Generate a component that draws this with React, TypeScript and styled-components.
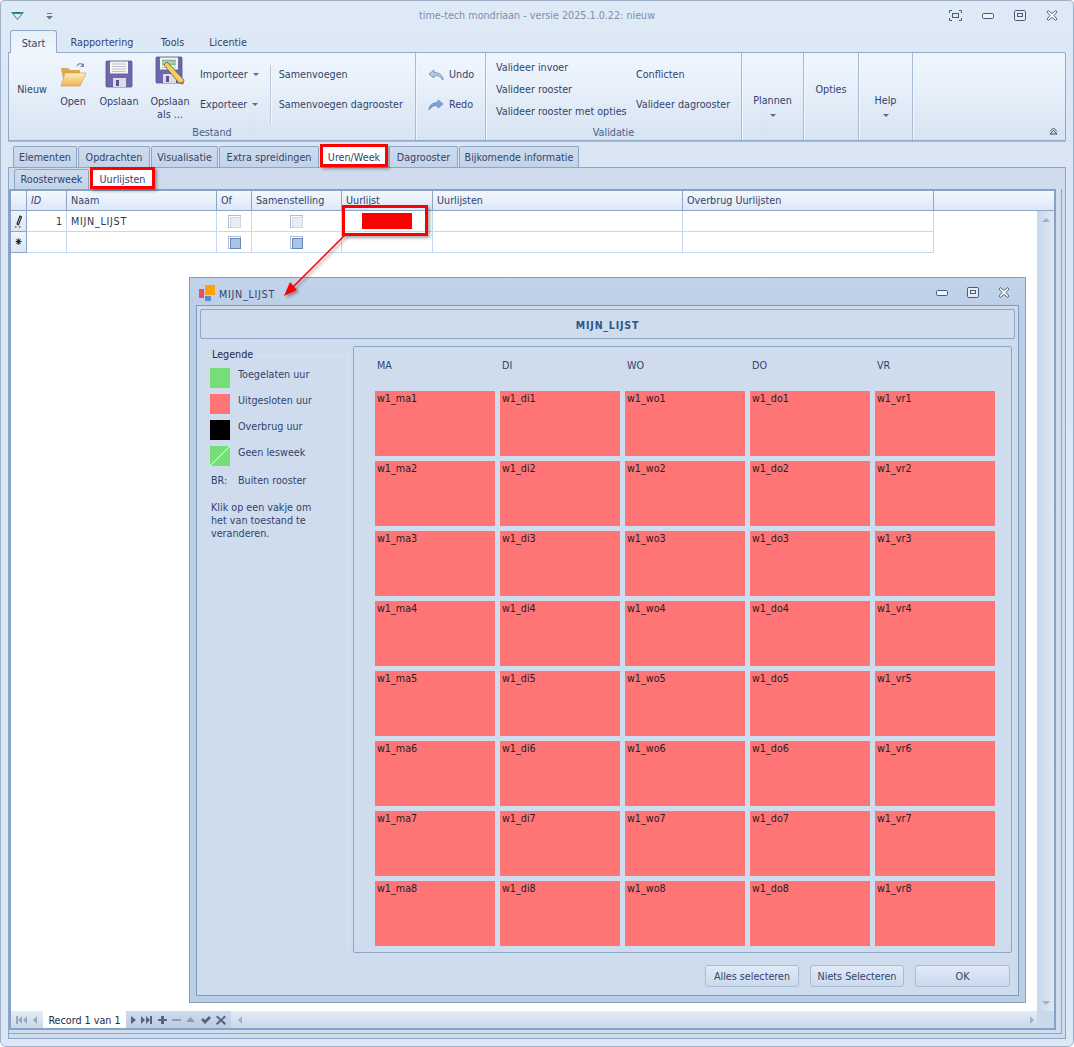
import React from "react";
import styled, { createGlobalStyle } from "styled-components";

const Global = createGlobalStyle`
  html, body { margin: 0; padding: 0; width: 1074px; height: 1047px; overflow: hidden; background: #fff; }
  * { box-sizing: border-box; }
  body { font-family: "DejaVu Sans Condensed", "DejaVu Sans", "Liberation Sans", sans-serif; font-stretch: condensed; font-size: 10.7px; color: #33436b; }
`;
const INK = "#33436b";
const COLS = "16px 40px 150px 35px 90px 91px 250px 251px";

const Win = styled.div`
  width: 1074px; height: 1047px; display: flex; flex-direction: column;
  border: 1px solid #9fb0c6; border-radius: 4px 4px 6px 6px; padding-bottom: 7px;
  background: linear-gradient(#dfeaf7, #dae6f4 130px, #dce8f5);
`;
const TitleBar = styled.div`
  height: 29px; flex: none; display: grid; grid-template-columns: 200px 1fr 200px; align-items: center;
`;
const QuickBar = styled.div`display: flex; align-items: center; gap: 21px; padding-left: 9px;`;
const Title = styled.div`text-align: center; color: #7d8ea9;`;
const WinBtns = styled.div`display: flex; justify-content: flex-end; align-items: center; gap: 20px; padding-right: 15px;`;
const RibbonTabs = styled.div`height: 23px; flex: none; display: flex; padding-left: 9px; align-items: flex-end; position: relative; z-index: 1;`;
const RibbonTab = styled.div<{ $w: number; $active?: boolean }>`
  width: ${p => p.$w}px; height: 23px; padding-top: 2px; display: flex; align-items: center; justify-content: center; color: ${INK};
  ${p => p.$active ? `background: linear-gradient(#e6f0fb, #eff6fd); border: 1px solid #93a9c8; border-bottom: 0; border-radius: 3px 3px 0 0;` : ""}
`;
const Ribbon = styled.div`
  height: 89px; flex: none; margin: -1px 7px 0; display: flex; border: 1px solid #93a9c8; border-radius: 0 2px 0 0;
  background: linear-gradient(#f0f6fe, #e6eff9 45%, #d6e3f2);
  box-shadow: 0 1px 0 #a9bcd6;
`;
const Group = styled.div<{ $w: number }>`
  width: ${p => p.$w}px; flex: none; display: flex; flex-direction: column; border-right: 1px solid #a8bbd4; box-shadow: 1px 0 0 #f2f7fd;
`;
const GroupBody = styled.div`height: 73px; display: flex; position: relative;`;
const GroupCaption = styled.div`height: 15px; text-align: center; color: #4a6190; line-height: 15px;`;
const Large = styled.div<{ $w: number; $ml?: number }>`
  width: ${p => p.$w}px; margin-left: ${p => p.$ml ?? 0}px; flex: none; display: flex; flex-direction: column; align-items: center;
  text-align: center; line-height: 13px; padding-top: 6px;
`;
const IconBox = styled.div`height: 29px; display: flex; align-items: flex-end; justify-content: center; margin-bottom: 7px;`;
const TextOnly = styled.div<{ $w: number; $pt: number; $ml?: number }>`
  width: ${p => p.$w}px; margin-left: ${p => p.$ml ?? 0}px; flex: none; padding-top: ${p => p.$pt}px; text-align: center; line-height: 13px;
`;
const SmallCol = styled.div<{ $w?: number; $ml: number }>`
  ${p => p.$w ? `width: ${p.$w}px;` : ""} margin-left: ${p => p.$ml}px; flex: none; padding-top: 15px; display: flex; flex-direction: column; gap: 17px;
`;
const TripleCol = styled(SmallCol)`padding-top: 8px; gap: 9px;`;
const Small = styled.div`height: 13px; line-height: 13px; white-space: nowrap; display: flex; align-items: center; gap: 5px;`;
const VSep = styled.div`width: 1px; height: 58px; margin: 12px 0 0 11px; background: #b9c9de; box-shadow: 1px 0 0 #f4f8fd;`;
const Caret = styled.span`display: inline-block; width: 0; height: 0; border: 3px solid transparent; border-top: 3px solid #5d6b86; border-bottom: 0;`;
const Fill = styled.div`flex: 1; position: relative;`;
const Collapse = styled.div`position: absolute; right: 7px; bottom: 5px; line-height: 0;`;

const Frame = styled.div`flex: 1; min-height: 0; margin: 5px 7px 0; display: flex; flex-direction: column;`;
const TabStrip = styled.div<{ $pl: number; $h: number }>`height: ${p => p.$h}px; flex: none; display: flex; padding-left: ${p => p.$pl}px; align-items: flex-end; position: relative; z-index: 1;`;
const Tab = styled.div<{ $w: number; $active?: boolean; $marked?: boolean }>`
  width: ${p => p.$w}px; height: 100%; flex: none; display: flex; align-items: center; justify-content: center; position: relative; margin-right: 1px;
  border: 1px solid #8ea6c6; border-bottom: 0; border-radius: 2px 2px 0 0; color: ${INK};
  background: ${p => p.$active ? "#fff" : "linear-gradient(#cfdcee, #c3d3e8)"};
  ${p => p.$marked ? `&::after { content: ""; position: absolute; inset: -3px -1px 0 -1px; border: 3px solid #f00; box-shadow: 2px 2px 3px rgba(0,0,0,.35); }` : ""}
`;
const OuterPanel = styled.div`
  flex: 1; min-height: 0; border: 1px solid #8ea6c6; background: #cfdcee; display: flex; flex-direction: column; padding: 1px 0 0 0;
`;
const InnerPanel = styled.div`
  flex: 1; min-height: 0; margin-right: 3px; margin-bottom: 4px; border-right: 1px solid #8ea6c6; border-bottom: 1px solid #8ea6c6; padding: 0 5px 3px 0; display: flex; flex-direction: column;
`;
const Grid = styled.div`
  flex: 1; min-height: 0; border: 2px solid #88a2c4; background: #fff; display: flex; flex-direction: column; position: relative;
`;
const HeaderRow = styled.div`
  height: 20px; flex: none; display: grid; grid-template-columns: ${COLS} 1fr; background: linear-gradient(#f3f8fe, #dce7f6); border-bottom: 1px solid #8ea6c6;
`;
const HCell = styled.div<{ $italic?: boolean }>`
  border-right: 1px solid #8ea6c6; padding-left: 4px; line-height: 19px; color: ${INK}; ${p => p.$italic ? "font-style: italic;" : ""}
  &:last-child { border-right: 0; }
`;
const GridMain = styled.div`flex: 1; min-height: 0; display: flex;`;
const Rows = styled.div`flex: 1; min-width: 0;`;
const Row = styled.div`
  width: 923px; height: 21px; display: grid; grid-template-columns: ${COLS}; border-bottom: 1px solid #c5d8f1;
`;
const Selector = styled.div`
  background: linear-gradient(#eef4fc, #dbe6f5); border-right: 1px solid #8ea6c6; border-bottom: 1px solid #8ea6c6; margin-bottom: -1px;
  display: flex; align-items: center; justify-content: center; color: #222; font-size: 12px;
`;
const Cell = styled.div<{ $right?: boolean; $center?: boolean }>`
  border-right: 1px solid #c5d8f1; padding: 0 4px; display: flex; align-items: center; position: relative; color: #2b3550; overflow: visible;
  ${p => p.$right ? "justify-content: flex-end;" : ""} ${p => p.$center ? "justify-content: center;" : ""}
`;
const CapsName = styled.span`letter-spacing: .7px;`;
const Check = styled.div<{ $new?: boolean }>`
  width: 13px; height: 13px; border: 1px solid #a9bfdc; padding: 1px; background: #fff;
  &::before { content: ""; display: block; width: 100%; height: 100%; border: 1px solid ${p => p.$new ? "#6b86ad" : "#cfd8e4"}; background: ${p => p.$new ? "#a9c4e6" : "#e9edf2"}; }
`;
const RedFill = styled.div`width: 50px; height: 16px; background: #f00;`;
const Mark = styled.div`
  position: absolute; left: 0; top: -6px; width: 86px; height: 31px; border: 3px solid #f00; box-shadow: 2px 2px 3px rgba(0,0,0,.35); z-index: 3; pointer-events: none;
`;
const Arrow = styled.svg`position: absolute; left: 270px; top: 40px; z-index: 6; overflow: visible; pointer-events: none;`;
const VScroll = styled.div`
  width: 17px; flex: none; background: linear-gradient(90deg, #c7d7ea, #dfe9f5); display: flex; flex-direction: column; align-items: center; justify-content: space-between; padding: 6px 0 5px;
`;
const Nav = styled.div`height: 17px; flex: none; display: flex; background: linear-gradient(#e4edf8, #c9d8eb);`;
const NavBlock = styled.div<{ $w: number; $dark?: boolean }>`
  width: ${p => p.$w}px; flex: none; display: flex; align-items: center; justify-content: space-around; padding: 0 2px;
  ${p => p.$dark ? "background: linear-gradient(#cddbec, #bccde3);" : ""}
`;
const RecordLabel = styled.div`width: 83px; flex: none; background: #fff; color: #222d4a; display: flex; align-items: center; justify-content: center; padding-top: 1px;`;
const HScroll = styled.div`flex: 1; display: flex; align-items: center; justify-content: space-between; padding: 0 2px 0 6px;`;
const Corner = styled.div`width: 17px; flex: none; background: #c9d8eb;`;

const Dialog = styled.div`
  position: absolute; left: 178px; top: 86px; width: 837px; height: 726px; z-index: 5;
  border: 1px solid #8c9bb1; background: linear-gradient(#c3d4ea, #bccfe8 30px); display: flex; flex-direction: column;
`;
const DlgTitle = styled.div`height: 27px; flex: none; display: flex; align-items: center; padding: 2px 15px 0 9px; gap: 4px; color: ${INK};`;
const DlgTitleText = styled.div`flex: 1; padding-top: 4px;`;
const DlgBtns = styled.div`display: flex; gap: 19px; align-items: center;`;
const DlgBody = styled.div`
  flex: 1; min-height: 0; margin: 0 6px 6px; border: 1px solid #7f9abb; background: #cfdcee; padding: 3px; display: flex; flex-direction: column;
`;
const DlgHeader = styled.div`
  height: 30px; flex: none; padding-top: 1px; border: 1px solid #8ea6c6; border-radius: 2px; display: flex; align-items: center; justify-content: center;
  font-weight: bold; color: #2d5688; font-family: "DejaVu Sans", sans-serif; font-size: 10.5px; letter-spacing: .8px;
`;
const DlgMain = styled.div`height: 607px; flex: none; display: flex; margin-top: 7px;`;
const LegendBox = styled.fieldset`
  width: 145px; flex: none; margin: 2px 0 0 4px; padding: 0 0 0 6px; border: 1px solid #dbe3ee; border-left: 0; border-bottom: 0; height: 600px; min-width: 0;
`;
const LegendTitle = styled.legend`padding: 0 3px 0 2px; margin-left: 0; color: #1f2a44; line-height: 14px;`;
const LegendRow = styled.div`height: 26px; display: flex; gap: 8px; color: ${INK};`;
const Swatch = styled.div<{ $bg: string }>`width: 20px; height: 20px; flex: none; background: ${p => p.$bg};`;
const LegendLabel = styled.div`line-height: 14px;`;
const LegendList = styled.div`margin-top: 6px;`;
const BrRow = styled.div`display: flex; margin-top: 2px; padding-left: 1px; line-height: 14px;`;
const BrKey = styled.div`width: 27px;`;
const Note = styled.p`margin: 13px 0 0 1px; line-height: 13px; width: 110px;`;
const Matrix = styled.div`
  width: 659px; flex: none; margin-left: 4px; height: 607px; border: 1px solid #8ea6c6; border-radius: 2px; padding: 0 16px 6px 21px;
  display: grid; grid-template-columns: repeat(5, 120px); grid-template-rows: 39px repeat(8, 65px); gap: 5px;
`;
const DayHead = styled.div`padding: 12px 0 0 2px; line-height: 13px; color: ${INK};`;
const Slot = styled.div`background: #ff7575; color: #1e1e28; padding: 1px 2px; line-height: 13px;`;
const Footer = styled.div`height: 22px; flex: none; display: flex; justify-content: flex-end; gap: 11px; padding-right: 5px; margin-top: 12px;`;
const Button = styled.div<{ $w: number }>`
  width: ${p => p.$w}px; height: 22px; border: 1px solid #a9bbd4; border-radius: 3px; background: linear-gradient(#e0ebf9, #cbd9ec);
  display: flex; align-items: center; justify-content: center; color: ${INK};
`;

const Logo = () => (
  <svg width="15" height="12" viewBox="0 0 15 12"><path d="M1 2h13l-6.500 8z" fill="#1d6f78" /><path d="M3.500 4h8l-4 5z" fill="#dfeaf7" /><path d="M1 2l5 1h3l5-1-2 1.500H3z" fill="#32b8a8" /></svg>
);
const QuickDrop = () => (
  <svg width="7" height="8" viewBox="0 0 7 8"><rect x="1" y="1" width="5" height="1" fill="#66748c" /><path d="M0 4h7L3.500 7.500z" fill="#66748c" /></svg>
);
const IconFocus = () => (
  <svg width="13" height="11" viewBox="0 0 13 11" fill="none" stroke="#4c5a76"><path d="M.5 3V.5H3M10 .5h2.500V3M.5 8v2.500H3M10 10.500h2.500V8" /><rect x="3.500" y="3.500" width="6" height="4" /></svg>
);
const IconMin = () => (
  <svg width="12" height="6" viewBox="0 0 12 6"><rect x=".5" y=".5" width="11" height="5" rx="1.200" fill="#eef3fa" stroke="#4c5a76" /></svg>
);
const IconMax = () => (
  <svg width="12" height="11" viewBox="0 0 12 11"><rect x=".5" y=".5" width="11" height="10" rx="1.200" fill="#e3ebf6" stroke="#4c5a76" /><rect x="3.500" y="3.500" width="5" height="3" fill="none" stroke="#4c5a76" /></svg>
);
const IconClose = () => (
  <svg width="12" height="11" viewBox="0 0 12 11"><path d="M1 2l1.200-1.500L6 3.500 9.800.5 11 2 8 5.500l3 3.500-1.200 1.500L6 7.500l-3.800 3L1 9l3-3.500z" fill="#f3f6fb" stroke="#4c5a76" strokeWidth=".9" /></svg>
);
const FolderIcon = () => (
  <svg width="28" height="27" viewBox="0 0 28 27">
    <defs><linearGradient id="fo" x1="0" y1="0" x2="0" y2="1"><stop offset="0" stopColor="#fff1bd" /><stop offset="1" stopColor="#eeb24f" /></linearGradient></defs>
    <path d="M18 5c2-3 4-3 6-1" fill="none" stroke="#7d8a99" strokeWidth="1.200" /><path d="M25 2v4h-4z" fill="#7d8a99" />
    <path d="M2 7h7l2 2h10v14H5z" fill="#d9a84f" />
    <path d="M6 12h21l-6 13H2z" fill="url(#fo)" stroke="#d6a24d" strokeWidth=".7" />
  </svg>
);
const Floppy = () => (
  <>
    <rect x="1" y="1" width="26" height="26" rx="1" fill="#6e67ab" stroke="#56508f" strokeWidth=".8" />
    <rect x="5" y="1.500" width="18" height="12" fill="#f4f4f6" />
    <path d="M7 4h14M7 6.500h14M7 9h14M7 11.500h14" stroke="#bfc0cc" />
    <rect x="8" y="18" width="13" height="9" fill="#dcdce8" />
    <rect x="11" y="20" width="3" height="6" fill="#5b5598" />
  </>
);
const SaveIcon = () => <svg width="28" height="28" viewBox="0 0 28 28"><Floppy /></svg>;
const SaveAsIcon = () => (
  <svg width="31" height="32" viewBox="0 0 31 32">
    <Floppy />
    <path d="M7 5h14" stroke="#3fbf3f" strokeWidth="1.200" /><path d="M7 8h14" stroke="#3fbf3f" strokeWidth="1.200" />
    <path d="M9 9l3-3 17 18-1 4-4-1z" fill="#f3d257" stroke="#5b5b5b" strokeWidth=".8" />
    <path d="M25 27l3 1-1-3z" fill="#d9534f" />
  </svg>
);
const UndoIcon = ({ flip }: { flip?: boolean }) => (
  <svg width="16" height="12" viewBox="0 0 16 12" style={flip ? { transform: "scaleX(-1)" } : undefined}>
    <path d="M6 1L1 5l5 4V7c3-1 6 0 9 4 0-5-4-7.500-9-7.500z" fill={flip ? "#7da4d6" : "#b5cbe6"} stroke="#5f86bb" strokeWidth=".8" />
  </svg>
);
const CollapseIcon = () => (
  <svg width="9" height="8" viewBox="0 0 9 8" fill="none" stroke="#3c4a63" strokeWidth="1"><path d="M1 4.500L4.500 1 8 4.500M1 7h7L4.500 3.500z" /></svg>
);
const PencilMark = () => (
  <svg width="9" height="13" viewBox="0 0 9 13"><path d="M6 1L3 9l1.500.8L7.500 2zM1 12h1.500M5 12h1.500" fill="#fff" stroke="#1b1b1b" strokeWidth="1.100" /></svg>
);
const Nv = ({ d, c = "#55637f", w = 11 }: { d: string; c?: string; w?: number }) => (
  <svg width={w} height="10" viewBox={`0 0 ${w} 10`}><path d={d} fill={c} /></svg>
);
const ScrollArrow = ({ d }: { d: string }) => <svg width="10" height="6" viewBox="0 0 10 6"><path d={d} fill="#a3b1c6" /></svg>;

const outerTabs: [string, number, boolean?][] = [
  ["Elementen", 65], ["Opdrachten", 73], ["Visualisatie", 68], ["Extra spreidingen", 101],
  ["Uren/Week", 69, true], ["Dagrooster", 70], ["Bijkomende informatie", 121],
];
const days = ["ma", "di", "wo", "do", "vr"];
const weeks = [1, 2, 3, 4, 5, 6, 7, 8];

export default function App() {
  return (
    <Win>
      <Global />
      <TitleBar>
        <QuickBar><Logo /><QuickDrop /></QuickBar>
        <Title>time-tech mondriaan - versie 2025.1.0.22: nieuw</Title>
        <WinBtns><IconFocus /><IconMin /><IconMax /><IconClose /></WinBtns>
      </TitleBar>
      <RibbonTabs>
        <RibbonTab $w={47} $active>Start</RibbonTab>
        <RibbonTab $w={90}>Rapportering</RibbonTab>
        <RibbonTab $w={51}>Tools</RibbonTab>
        <RibbonTab $w={60}>Licentie</RibbonTab>
      </RibbonTabs>
      <Ribbon>
        <Group $w={407}>
          <GroupBody>
            <TextOnly $w={30} $ml={8} $pt={30}>Nieuw</TextOnly>
            <Large $w={40} $ml={6}><IconBox><FolderIcon /></IconBox>Open</Large>
            <Large $w={42} $ml={5}><IconBox><SaveIcon /></IconBox>Opslaan</Large>
            <Large $w={44} $ml={8}><IconBox><SaveAsIcon /></IconBox>Opslaan<br />als ...</Large>
            <SmallCol $ml={8}>
              <Small>Importeer <Caret /></Small>
              <Small>Exporteer <Caret /></Small>
            </SmallCol>
            <VSep />
            <SmallCol $ml={8}>
              <Small>Samenvoegen</Small>
              <Small>Samenvoegen dagrooster</Small>
            </SmallCol>
          </GroupBody>
          <GroupCaption>Bestand</GroupCaption>
        </Group>
        <Group $w={70}>
          <GroupBody>
            <SmallCol $ml={12}>
              <Small><UndoIcon />Undo</Small>
              <Small><UndoIcon flip />Redo</Small>
            </SmallCol>
          </GroupBody>
          <GroupCaption />
        </Group>
        <Group $w={256}>
          <GroupBody>
            <TripleCol $w={130} $ml={10}>
              <Small>Valideer invoer</Small>
              <Small>Valideer rooster</Small>
              <Small>Valideer rooster met opties</Small>
            </TripleCol>
            <SmallCol $ml={10}>
              <Small>Conflicten</Small>
              <Small>Valideer dagrooster</Small>
            </SmallCol>
          </GroupBody>
          <GroupCaption>Validatie</GroupCaption>
        </Group>
        <Group $w={62}>
          <GroupBody><TextOnly $w={61} $pt={41}>Plannen<br /><Caret /></TextOnly></GroupBody>
        </Group>
        <Group $w={55}>
          <GroupBody><TextOnly $w={54} $pt={30}>Opties</TextOnly></GroupBody>
        </Group>
        <Group $w={54}>
          <GroupBody><TextOnly $w={53} $pt={41}>Help<br /><Caret /></TextOnly></GroupBody>
        </Group>
        <Fill><Collapse><CollapseIcon /></Collapse></Fill>
      </Ribbon>
      <Frame>
        <TabStrip $pl={5} $h={21}>
          {outerTabs.map(([t, w, m]) => <Tab key={t} $w={w - 1} $active={m} $marked={m}>{t}</Tab>)}
        </TabStrip>
        <OuterPanel>
          <TabStrip $pl={5} $h={20}>
            <Tab $w={75}>Roosterweek</Tab>
            <Tab $w={65} $active $marked>Uurlijsten</Tab>
          </TabStrip>
          <InnerPanel>
            <Grid>
              <HeaderRow>
                <HCell />
                <HCell $italic>ID</HCell>
                <HCell>Naam</HCell>
                <HCell>Of</HCell>
                <HCell>Samenstelling</HCell>
                <HCell>Uurlijst</HCell>
                <HCell>Uurlijsten</HCell>
                <HCell>Overbrug Uurlijsten</HCell>
                <HCell />
              </HeaderRow>
              <GridMain>
                <Rows>
                  <Row>
                    <Selector><PencilMark /></Selector>
                    <Cell $right>1</Cell>
                    <Cell><CapsName>MIJN_LIJST</CapsName></Cell>
                    <Cell $center><Check /></Cell>
                    <Cell $center><Check /></Cell>
                    <Cell $center><RedFill /><Mark /></Cell>
                    <Cell />
                    <Cell />
                  </Row>
                  <Row>
                    <Selector>⁕</Selector>
                    <Cell />
                    <Cell />
                    <Cell $center><Check $new /></Cell>
                    <Cell $center><Check $new /></Cell>
                    <Cell />
                    <Cell />
                    <Cell />
                  </Row>
                </Rows>
                <VScroll>
                  <ScrollArrow d="M5 1l4 4H1z" />
                  <ScrollArrow d="M1 1h8L5 5z" />
                </VScroll>
              </GridMain>
              <Nav>
                <NavBlock $w={32}>
                  <Nv c="#9aa8bc" d="M0 1h2v8H0zM6 1v8L2 5zM11 1v8L7 5z" />
                  <Nv c="#9aa8bc" w={6} d="M5 1v8L1 5z" />
                </NavBlock>
                <RecordLabel>Record 1 van 1</RecordLabel>
                <NavBlock $w={105} $dark>
                  <Nv w={5} d="M0 1v8l5-4z" />
                  <Nv d="M0 1v8l4-4zM5 1v8l4-4zM9 1h2v8H9z" />
                  <Nv w={9} d="M3 1h3v3h3v2H6v3H3V6H0V4h3z" />
                  <Nv c="#8e9db3" w={9} d="M0 4h9v2H0z" />
                  <Nv c="#8e9db3" w={9} d="M4.500 2L9 7H0z" />
                  <Nv w={10} d="M0 5l2-2 2 2 4-4 2 2-6 6z" />
                  <Nv w={10} d="M0 2l1.500-1.500L5 4 8.500.5 10 2 6.500 5 10 8.500 8.500 10 5 6.500 1.500 10 0 8.500 3.500 5z" />
                </NavBlock>
                <HScroll>
                  <Nv c="#a3b1c6" w={6} d="M5 1v8L1 5z" />
                  <Nv c="#a3b1c6" w={6} d="M1 1v8l4-4z" />
                </HScroll>
                <Corner />
              </Nav>
              <Arrow width="90" height="70" viewBox="0 0 90 70">
                <defs><filter id="as" x="-20%" y="-20%" width="150%" height="150%"><feDropShadow dx="2" dy="2" stdDeviation="1.500" floodOpacity=".35" /></filter></defs>
                <g filter="url(#as)"><path d="M64 4L8 60" stroke="#f00" strokeWidth="1.500" /><path d="M3 65l6-14 7 8z" fill="#f00" /></g>
              </Arrow>
              <Dialog>
                <DlgTitle>
                  <svg width="16" height="16" viewBox="0 0 16 16"><rect x="0" y="4" width="5" height="9" fill="#e8505f" /><rect x="6" y="0" width="10" height="10" fill="#ffa200" /><rect x="6" y="11" width="6" height="5" fill="#5e8bd6" /></svg>
                  <DlgTitleText><CapsName>MIJN_LIJST</CapsName></DlgTitleText>
                  <DlgBtns><IconMin /><IconMax /><IconClose /></DlgBtns>
                </DlgTitle>
                <DlgBody>
                  <DlgHeader>MIJN_LIJST</DlgHeader>
                  <DlgMain>
                    <LegendBox>
                      <LegendTitle>Legende</LegendTitle>
                      <LegendList>
                        <LegendRow><Swatch $bg="#77dd77" /><LegendLabel>Toegelaten uur</LegendLabel></LegendRow>
                        <LegendRow><Swatch $bg="#ff7575" /><LegendLabel>Uitgesloten uur</LegendLabel></LegendRow>
                        <LegendRow><Swatch $bg="#000" /><LegendLabel>Overbrug uur</LegendLabel></LegendRow>
                        <LegendRow><Swatch $bg="linear-gradient(to top left, #77dd77 48%, #fff 48%, #fff 52%, #77dd77 52%)" /><LegendLabel>Geen lesweek</LegendLabel></LegendRow>
                      </LegendList>
                      <BrRow><BrKey>BR:</BrKey>Buiten rooster</BrRow>
                      <Note>Klik op een vakje om het van toestand te veranderen.</Note>
                    </LegendBox>
                    <Matrix>
                      {days.map(d => <DayHead key={d}>{d.toUpperCase()}</DayHead>)}
                      {weeks.map(w => days.map(d => <Slot key={`${w}${d}`}>{`w1_${d}${w}`}</Slot>))}
                    </Matrix>
                  </DlgMain>
                  <Footer>
                    <Button $w={94}>Alles selecteren</Button>
                    <Button $w={94}>Niets Selecteren</Button>
                    <Button $w={95}>OK</Button>
                  </Footer>
                </DlgBody>
              </Dialog>
            </Grid>
          </InnerPanel>
        </OuterPanel>
      </Frame>
    </Win>
  );
}
